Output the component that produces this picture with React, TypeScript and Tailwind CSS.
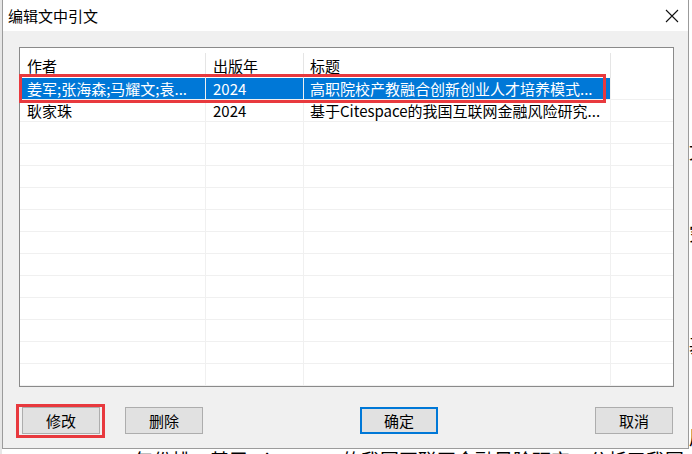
import React from 'react';

interface Citation {
  author: string;
  year: string;
  title: string;
}

const citations: Citation[] = [
  { author: '姜军;张海森;马耀文;袁...', year: '2024', title: '高职院校产教融合创新创业人才培养模式...' },
  { author: '耿家珠', year: '2024', title: '基于Citespace的我国互联网金融风险研究...' },
];

const EMPTY_ROWS = 12;

const Cell: React.FC<{ w: string; children?: React.ReactNode; pl?: string }> = ({ w, children, pl }) => (
  <div className={`${w} ${pl ?? 'pl-[7px]'} flex h-full shrink-0 items-center overflow-hidden whitespace-nowrap border-r border-[#f0f0f0]`}>
    {children}
  </div>
);

const CitationRow: React.FC<{ item?: Citation; selected?: boolean }> = ({ item, selected }) => (
  <div className="flex h-[22px] border-b border-[#f0f0f0]">
    <div className={`flex h-full ${selected ? 'bg-[#0078d7] text-white' : 'text-black'}`}>
      <Cell w="w-[186px]">{item?.author}</Cell>
      <Cell w="w-[98px]">{item?.year}</Cell>
      <Cell w="w-[307px]" pl="pl-[6px]">{item?.title}</Cell>
    </div>
    <div className="flex-1" />
  </div>
);

const Button: React.FC<{ label: string; primary?: boolean; className?: string; children?: React.ReactNode }> = ({
  label,
  primary,
  className,
  children,
}) => (
  <div className={`relative ${className ?? ''}`}>
    <button
      className={`flex h-[27px] w-[78px] items-center justify-center bg-[#e1e1e1] text-[15px] leading-none text-black ${
        primary ? 'border-2 border-[#0078d7]' : 'border border-[#adadad]'
      }`}
    >
      {label}
    </button>
    {children}
  </div>
);

export default function App() {
  return (
    <div className="flex h-[454px] w-[692px] overflow-hidden bg-white font-['Noto_Sans_CJK_SC',sans-serif] text-[15px]">
      <div className="w-[2px] shrink-0 bg-[#e6e6e6]" />
      <div className="flex w-[687px] shrink-0 flex-col">
        {/* dialog */}
        <div className="flex h-[449px] shrink-0 flex-col border-b border-l border-r border-[#9b9b9b] bg-[#f0f0f0]">
          <div className="flex h-[31px] shrink-0 items-center justify-between bg-white pl-[5px] pr-[9px]">
            <span className="leading-[20px] text-black">编辑文中引文</span>
            <svg width="14" height="14" viewBox="0 0 14 14" className="mt-[1px]">
              <path d="M1 1L13 13M13 1L1 13" stroke="#111" strokeWidth="1.1" fill="none" />
            </svg>
          </div>

          <div className="flex flex-1 flex-col pl-[16px] pr-[14px] pt-[16px]">
            <div className="relative h-[340px] w-[655px] border border-[#8a8a8a] bg-white leading-[20px]">
              <div className="flex h-[30px] pt-[5px] text-black">
                <div className="flex h-full w-[186px] items-center border-r border-[#e5e5e5] pl-[7px]">作者</div>
                <div className="flex h-full w-[98px] items-center border-r border-[#e5e5e5] pl-[7px]">出版年</div>
                <div className="flex h-full w-[307px] items-center border-r border-[#e5e5e5] pl-[6px]">标题</div>
                <div className="flex-1" />
              </div>
              {citations.map((c, i) => (
                <CitationRow key={c.author} item={c} selected={i === 0} />
              ))}
              {Array.from({ length: EMPTY_ROWS }).map((_, i) => (
                <CitationRow key={i} />
              ))}
              <div className="pointer-events-none absolute left-[-1px] top-[26px] h-[29px] w-[587px] border-[3px] border-[#e8393e]" />
            </div>

            <div className="mt-[20px] flex leading-none">
              <Button label="修改" className="ml-[3px]">
                <div className="pointer-events-none absolute -left-[6px] -right-[5px] -top-[3px] -bottom-[4px] border-[3px] border-[#e8393e]" />
              </Button>
              <Button label="删除" className="ml-[25px]" />
              <Button label="确定" primary className="ml-[157px]" />
              <Button label="取消" className="ml-[157px]" />
            </div>
          </div>
        </div>
        {/* document text behind the dialog */}
        <div className="ml-[132px] mt-[1px] whitespace-nowrap text-[19px] leading-[20px] text-black">
          年份排：基于 Citespace 的我国互联网金融风险研究，分析了我国
        </div>
      </div>
      <div className="flex w-[3px] shrink-0 flex-col overflow-hidden whitespace-nowrap pt-[140px] text-[19px] leading-[22px] text-black">
        <span className="block h-[22px]">文</span>
        <span className="mt-[60px] block h-[22px]">究</span>
        <span className="mt-[90px] block h-[22px]">基</span>
        <span className="mt-[70px] block h-[22px]">展</span>
      </div>
    </div>
  );
}
